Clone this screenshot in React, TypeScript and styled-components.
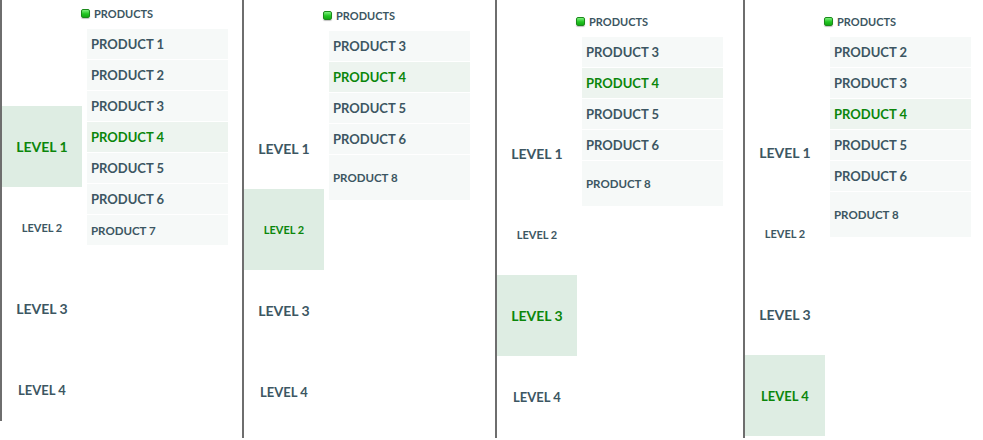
import styled, { createGlobalStyle } from "styled-components";
import { ReactElement } from "react";

const GlobalStyle = createGlobalStyle`
  html, body {
    margin: 0;
    padding: 0;
    background: #ffffff;
  }
  body {
    font-family: Lato, "Liberation Sans", sans-serif;
  }
`

const Board = styled.div`
  display: flex;
  width: 983px;
  height: 440px;
  overflow: hidden;
`

const Panel = styled.div<{ $width: number; $height: number; $shift: number }>`
  display: flex;
  flex: 0 0 ${p => p.$width}px;
  height: ${p => p.$height}px;
  padding-top: ${p => p.$shift}px;
  box-sizing: border-box;
  border-left: 2px solid #6e6e6e;
`

const LevelColumn = styled.div<{ $top: number }>`
  display: flex;
  flex-direction: column;
  flex-shrink: 0;
  width: 80px;
  padding-top: ${p => p.$top}px;
`

const Level = styled.div<{ $active: boolean; $size: number }>`
  display: flex;
  flex-shrink: 0;
  align-items: center;
  justify-content: center;
  height: 81px;
  font-size: ${p => p.$size}px;
  font-weight: 700;
  color: ${p => (p.$active ? "#0b860b" : "#3c5662")};
  background: ${p => (p.$active ? "#deede3" : "transparent")};
`

const ProductColumn = styled.div`
  display: flex;
  flex-direction: column;
  padding-top: 5px;
`

const Header = styled.div`
  display: flex;
  align-items: center;
  gap: 4px;
  height: 16px;
  margin-left: -1px;
  font-size: 11px;
  font-weight: 700;
  color: #3c5662;
`

const Bullet = styled.span`
  width: 7px;
  height: 7px;
  border-radius: 2px;
  border: 1px solid #1b8a1b;
  background: linear-gradient(#7ef07e, #22c522 55%, #14a814);
  box-shadow: 0 1px 1px rgba(0, 0, 0, 0.25);
`

const ProductList = styled.div`
  display: flex;
  flex-direction: column;
  gap: 1px;
  width: 141px;
  margin-top: 8px;
  margin-left: 5px;
`

const Product = styled.div<{ $active: boolean; $small: boolean; $tall: boolean }>`
  display: flex;
  align-items: center;
  height: ${p => (p.$tall ? 45 : 30)}px;
  padding-left: 4px;
  font-size: ${p => (p.$small ? 11.5 : 13)}px;
  font-weight: 700;
  color: ${p => (p.$active ? "#0b860b" : "#3c5662")};
  background: ${p => (p.$active ? "#edf4ef" : "#f6f9f8")};
`

type PanelData = {
  width: number
  height: number
  shift: number
  levelTop: number
  level: number
  products: number[]
  lastTall: boolean
}

const panels: PanelData[] = [
  { width: 242, height: 421, shift: 0, levelTop: 106, level: 1, products: [1, 2, 3, 4, 5, 6, 7], lastTall: false },
  { width: 253, height: 438, shift: 2, levelTop: 106, level: 2, products: [3, 4, 5, 6, 8], lastTall: true },
  { width: 248, height: 438, shift: 8, levelTop: 105, level: 3, products: [3, 4, 5, 6, 8], lastTall: true },
  { width: 240, height: 438, shift: 8, levelTop: 104, level: 4, products: [2, 3, 4, 5, 6, 8], lastTall: true },
]

const levelSizes = [14, 11, 14, 13]

export const App = (): ReactElement => {
  return (
    <>
      <GlobalStyle />
      <Board>
        {panels.map((panel, i) => (
          <Panel key={i} $width={panel.width} $height={panel.height} $shift={panel.shift}>
            <LevelColumn $top={panel.levelTop}>
              {levelSizes.map((size, n) => (
                <Level key={n} $active={panel.level === n + 1} $size={size}>
                  LEVEL {n + 1}
                </Level>
              ))}
            </LevelColumn>
            <ProductColumn>
              <Header>
                <Bullet />
                PRODUCTS
              </Header>
              <ProductList>
                {panel.products.map((num, n) => {
                  const last = n === panel.products.length - 1
                  return (
                    <Product
                      key={num}
                      $active={num === 4}
                      $small={last}
                      $tall={last && panel.lastTall}
                    >
                      PRODUCT {num}
                    </Product>
                  )
                })}
              </ProductList>
            </ProductColumn>
          </Panel>
        ))}
      </Board>
    </>
  )
}

export default App
